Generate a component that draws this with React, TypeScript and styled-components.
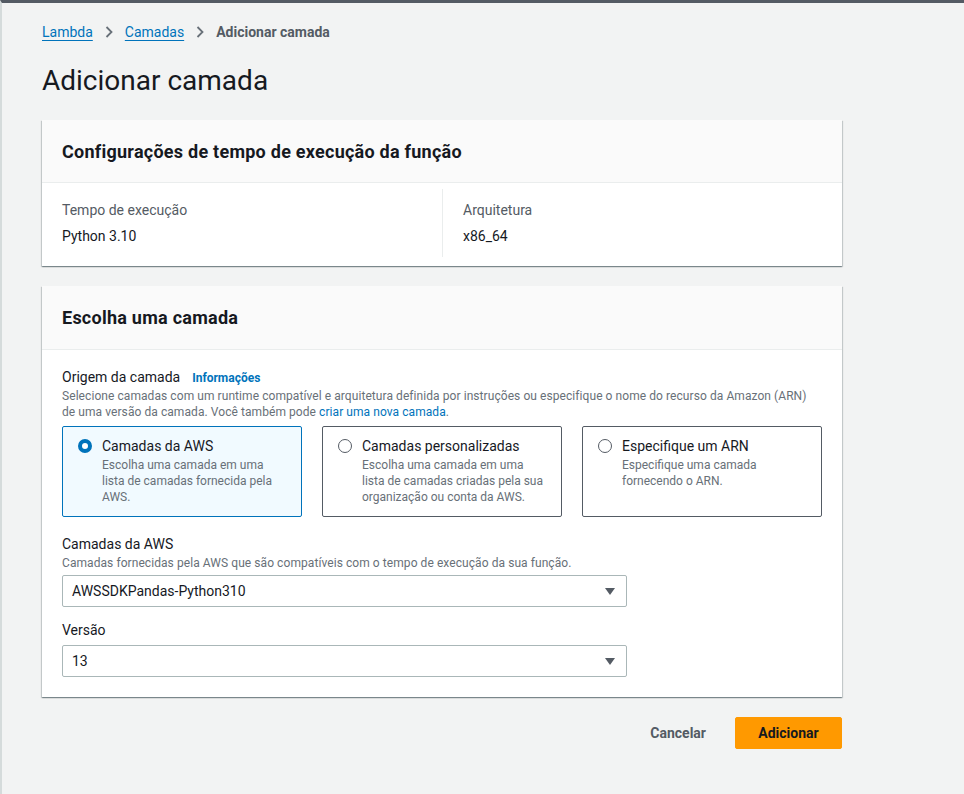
import React from "react";
import styled, { createGlobalStyle } from "styled-components";

const Global = createGlobalStyle`
  html, body { margin: 0; padding: 0; background: #f2f3f3; }
  body { font-family: Roboto, "Liberation Sans", Arial, sans-serif; color: #16191f; }
  * { box-sizing: border-box; }
`;

const Page = styled.div`
  min-height: 794px;
  border-top: 3px solid #545b64;
  border-left: 2px solid #d5dbdb;
  padding: 19px 0 40px 40px;
  width: 964px;
`;

const Content = styled.div`
  width: 800px;
`;

const Crumbs = styled.nav`
  display: flex;
  align-items: center;
  gap: 8px;
  font-size: 14px;
  height: 20px;
`;

const CrumbLink = styled.a`
  color: #0073bb;
  text-decoration: underline;
  text-underline-offset: 3px;
  text-decoration-thickness: 1px;
`;

const CrumbCurrent = styled.span`
  color: #545b64;
  font-weight: 700;
`;

const Chevron = styled.svg`
  width: 12px;
  height: 12px;
  margin: 0 2px;
`;

const Title = styled.h1`
  margin: 21px 0 0;
  font-size: 28px;
  font-weight: 400;
  line-height: 36px;
  color: #16191f;
`;

const Card = styled.section<{ $mt: number }>`
  margin-top: ${(p) => p.$mt}px;
  background: #fff;
  box-shadow: 0 1px 1px 0 rgba(0, 28, 36, 0.3), 1px 1px 1px 0 rgba(0, 28, 36, 0.15),
    -1px 1px 1px 0 rgba(0, 28, 36, 0.15);
`;

const CardHeader = styled.div<{ $h: number }>`
  background: #fafafa;
  border-bottom: 1px solid #eaeded;
  height: ${(p) => p.$h}px;
  padding: 0 20px;
  display: flex;
  align-items: center;
`;

const CardTitle = styled.h2`
  margin: 0;
  font-size: 18px;
  font-weight: 700;
  letter-spacing: 0.25px;
  color: #16191f;
`;

const Columns = styled.div`
  display: grid;
  grid-template-columns: 1fr 1fr;
  padding: 6px 0 9px;
`;

const Column = styled.div<{ $divider?: boolean }>`
  padding: 10px 20px 10px;
  ${(p) => (p.$divider ? "border-left: 1px solid #eaeded;" : "")}
`;

const KeyLabel = styled.div`
  font-size: 14px;
  color: #545b64;
  line-height: 22px;
`;

const KeyValue = styled.div`
  font-size: 14px;
  color: #16191f;
  line-height: 22px;
  margin-top: 4px;
`;

const Body = styled.div`
  padding: 16px 20px 20px;
`;

const LabelRow = styled.div`
  display: flex;
  align-items: baseline;
  gap: 12px;
`;

const FieldLabel = styled.div`
  font-size: 14px;
  line-height: 22px;
  color: #16191f;
`;

const InfoLink = styled.a`
  font-size: 12px;
  font-weight: 700;
  color: #0073bb;
`;

const Desc = styled.div`
  font-size: 12px;
  color: #687078;
  line-height: 16px;
  letter-spacing: 0.07px;
`;

const Link = styled.span`
  color: #0073bb;
`;

const Tiles = styled.div`
  display: grid;
  grid-template-columns: repeat(3, 240px);
  gap: 20px;
  margin-top: 6px;
`;

const Tile = styled.div<{ $selected?: boolean }>`
  height: 91px;
  border: 1px solid ${(p) => (p.$selected ? "#0073bb" : "#545b64")};
  background: ${(p) => (p.$selected ? "#f1faff" : "#fff")};
  border-radius: 2px;
  padding: 9px 15px;
  display: grid;
  grid-template-columns: 24px 1fr;
  align-items: start;
`;

const Radio = styled.span<{ $on?: boolean }>`
  width: 14px;
  height: 14px;
  border-radius: 50%;
  margin-top: 3px;
  border: ${(p) => (p.$on ? "4px solid #0073bb" : "1.5px solid #545b64")};
  background: #fff;
`;

const TileTitle = styled.div`
  font-size: 14px;
  line-height: 20px;
  color: #16191f;
`;

const TileDesc = styled.div`
  font-size: 12px;
  line-height: 16px;
  color: #687078;
  margin-top: 1px;
`;

const Field = styled.div<{ $mt: number }>`
  margin-top: ${(p) => p.$mt}px;
  width: 565px;
`;

const Select = styled.div`
  margin-top: 4px;
  height: 32px;
  border: 1px solid #aab7b8;
  border-radius: 2px;
  display: flex;
  align-items: center;
  justify-content: space-between;
  padding: 0 10px 0 9px;
  font-size: 14px;
  color: #16191f;
  background: #fff;
`;

const Caret = styled.svg`
  width: 12px;
  height: 12px;
`;

const Actions = styled.div`
  display: flex;
  justify-content: flex-end;
  align-items: center;
  gap: 8px;
  margin-top: 20px;
`;

const Button = styled.button<{ $primary?: boolean }>`
  font-family: inherit;
  font-size: 14px;
  font-weight: 700;
  height: 32px;
  border-radius: 2px;
  cursor: pointer;
  border: 1px solid ${(p) => (p.$primary ? "#ff9900" : "transparent")};
  background: ${(p) => (p.$primary ? "#ff9900" : "transparent")};
  color: ${(p) => (p.$primary ? "#16191f" : "#545b64")};
  padding: 0 20px;
  min-width: ${(p) => (p.$primary ? "107px" : "auto")};
`;

const ChevronIcon = () => (
  <Chevron viewBox="0 0 12 12">
    <path d="M3.5 1 L8.5 6 L3.5 11" fill="none" stroke="#687078" strokeWidth="1.8" />
  </Chevron>
);

const CaretIcon = () => (
  <Caret viewBox="0 0 12 12">
    <path d="M1 3 H11 L6 10 Z" fill="#545b64" />
  </Caret>
);

const tiles = [
  {
    title: "Camadas da AWS",
    desc: ["Escolha uma camada em uma", "lista de camadas fornecida pela", "AWS."],
    selected: true,
  },
  {
    title: "Camadas personalizadas",
    desc: ["Escolha uma camada em uma", "lista de camadas criadas pela sua", "organização ou conta da AWS."],
  },
  {
    title: "Especifique um ARN",
    desc: ["Especifique uma camada", "fornecendo o ARN."],
  },
];

export default function App() {
  return (
    <>
      <Global />
      <Page>
        <Content>
          <Crumbs>
            <CrumbLink>Lambda</CrumbLink>
            <ChevronIcon />
            <CrumbLink>Camadas</CrumbLink>
            <ChevronIcon />
            <CrumbCurrent>Adicionar camada</CrumbCurrent>
          </Crumbs>
          <Title>Adicionar camada</Title>

          <Card $mt={21}>
            <CardHeader $h={63}>
              <CardTitle>Configurações de tempo de execução da função</CardTitle>
            </CardHeader>
            <Columns>
              <Column>
                <KeyLabel>Tempo de execução</KeyLabel>
                <KeyValue>Python 3.10</KeyValue>
              </Column>
              <Column $divider>
                <KeyLabel>Arquitetura</KeyLabel>
                <KeyValue>x86_64</KeyValue>
              </Column>
            </Columns>
          </Card>

          <Card $mt={20}>
            <CardHeader $h={64}>
              <CardTitle>Escolha uma camada</CardTitle>
            </CardHeader>
            <Body>
              <LabelRow>
                <FieldLabel>Origem da camada</FieldLabel>
                <InfoLink>Informações</InfoLink>
              </LabelRow>
              <Desc>
                Selecione camadas com um runtime compatível e arquitetura definida por instruções ou especifique o nome do recurso da Amazon (ARN)
                <br />
                de uma versão da camada. Você também pode <Link>criar uma nova camada</Link>.
              </Desc>
              <Tiles>
                {tiles.map((t) => (
                  <Tile key={t.title} $selected={t.selected}>
                    <Radio $on={t.selected} />
                    <div>
                      <TileTitle>{t.title}</TileTitle>
                      <TileDesc>
                        {t.desc.map((d) => (
                          <div key={d}>{d}</div>
                        ))}
                      </TileDesc>
                    </div>
                  </Tile>
                ))}
              </Tiles>

              <Field $mt={16}>
                <FieldLabel>Camadas da AWS</FieldLabel>
                <Desc>Camadas fornecidas pela AWS que são compatíveis com o tempo de execução da sua função.</Desc>
                <Select>
                  <span>AWSSDKPandas-Python310</span>
                  <CaretIcon />
                </Select>
              </Field>
              <Field $mt={12}>
                <FieldLabel>Versão</FieldLabel>
                <Select>
                  <span>13</span>
                  <CaretIcon />
                </Select>
              </Field>
            </Body>
          </Card>

          <Actions>
            <Button>Cancelar</Button>
            <Button $primary>Adicionar</Button>
          </Actions>
        </Content>
      </Page>
    </>
  );
}
